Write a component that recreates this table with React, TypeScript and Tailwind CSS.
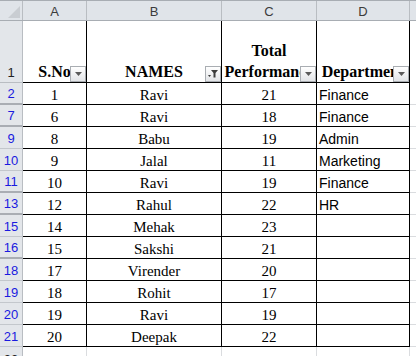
type Row = {
  num: number;
  sno: number;
  name: string;
  total: number;
  dept: string;
  gapAfter?: boolean;
};

const rows: Row[] = [
  { num: 2, sno: 1, name: "Ravi", total: 21, dept: "Finance", gapAfter: true },
  { num: 7, sno: 6, name: "Ravi", total: 18, dept: "Finance", gapAfter: true },
  { num: 9, sno: 8, name: "Babu", total: 19, dept: "Admin" },
  { num: 10, sno: 9, name: "Jalal", total: 11, dept: "Marketing" },
  { num: 11, sno: 10, name: "Ravi", total: 19, dept: "Finance", gapAfter: true },
  { num: 13, sno: 12, name: "Rahul", total: 22, dept: "HR", gapAfter: true },
  { num: 15, sno: 14, name: "Mehak", total: 23, dept: "" },
  { num: 16, sno: 15, name: "Sakshi", total: 21, dept: "", gapAfter: true },
  { num: 18, sno: 17, name: "Virender", total: 20, dept: "" },
  { num: 19, sno: 18, name: "Rohit", total: 17, dept: "" },
  { num: 20, sno: 19, name: "Ravi", total: 19, dept: "" },
  { num: 21, sno: 20, name: "Deepak", total: 22, dept: "" },
];

const sans = "font-['Liberation_Sans',Arial,sans-serif]";
const serif = "font-['Liberation_Serif','Times_New_Roman',serif]";

function FilterButton({ filtered }: { filtered?: boolean }) {
  return (
    <div className="absolute right-0 bottom-0 w-[16px] h-[16px] border border-[#a9adb2] bg-gradient-to-b from-white to-[#e2e4e7] flex items-center justify-center">
      {filtered ? (
        <svg width="12" height="10" viewBox="0 0 12 10">
          <polygon points="4,1 11,1 8.5,4 8.5,8.5 6.5,8.5 6.5,4" fill="#3c3c3c" />
          <polygon points="1,6 4,6 2.5,8" fill="#3c3c3c" />
        </svg>
      ) : (
        <svg width="7" height="4" viewBox="0 0 7 4">
          <polygon points="0,0 7,0 3.5,4" fill="#5a5a5a" />
        </svg>
      )}
    </div>
  );
}

export default function App() {
  return (
    <div className="w-[416px] h-[356px] overflow-hidden bg-white">
      {/* column letters */}
      <div className={`flex h-[21px] border-t border-b border-[#a8adb3] bg-[#e0e4e9] text-[13px] text-[#3b3b3b] ${sans}`}>
        <div className="w-[23px] shrink-0 border-r border-[#b9bdc2] relative">
          <svg className="absolute right-[2px] bottom-[2px]" width="12" height="12" viewBox="0 0 12 12">
            <polygon points="12,0 12,12 0,12" fill="#c9cdd2" />
          </svg>
        </div>
        <div className="w-[64px] shrink-0 border-r border-[#b9bdc2] flex items-end justify-center leading-[16px]">A</div>
        <div className="w-[135px] shrink-0 border-r border-[#b9bdc2] flex items-end justify-center leading-[16px]">B</div>
        <div className="w-[95px] shrink-0 border-r border-[#b9bdc2] flex items-end justify-center leading-[16px]">C</div>
        <div className="w-[93px] shrink-0 border-r border-[#b9bdc2] flex items-end justify-center leading-[16px]">D</div>
        <div className="flex-1" />
      </div>

      {/* row 1: table headers */}
      <div className="flex h-[62px]">
        <div className={`w-[23px] shrink-0 bg-[#e3e6ea] border-r border-b border-[#b9bdc2] flex items-end justify-center pb-[1px] leading-[16px] text-[13px] text-[#222] ${sans}`}>
          1
        </div>
        <div className={`relative w-[64px] shrink-0 border-r border-b border-black flex items-end justify-center overflow-hidden text-[16px] font-bold leading-[21px] text-black ${serif}`}>
          <span className="whitespace-nowrap">S.No</span>
          <FilterButton />
        </div>
        <div className={`relative w-[135px] shrink-0 border-r border-b border-black flex items-end justify-center overflow-hidden text-[16px] font-bold leading-[21px] text-black ${serif}`}>
          <span className="whitespace-nowrap">NAMES</span>
          <FilterButton filtered />
        </div>
        <div className={`relative w-[95px] shrink-0 border-r border-b border-black flex flex-col justify-end items-center overflow-hidden text-[16px] font-bold leading-[21px] text-black ${serif}`}>
          <span className="whitespace-nowrap">Total</span>
          <span className="whitespace-nowrap">Performance</span>
          <FilterButton />
        </div>
        <div className={`relative w-[93px] shrink-0 border-r border-b border-black flex items-end justify-center overflow-hidden text-[16px] font-bold leading-[21px] text-black ${serif}`}>
          <span className="whitespace-nowrap">Department</span>
          <FilterButton />
        </div>
        <div className="flex-1" />
      </div>

      {/* data rows */}
      {rows.map((r) => (
        <div key={r.num} className="flex h-[22px]">
          <div
            className={`w-[23px] shrink-0 bg-[#e3e6ea] border-r border-[#b9bdc2] flex items-end justify-center pb-[1px] leading-[16px] text-[13px] text-[#1a1adf] ${sans} ${
              r.gapAfter ? "border-b-2 border-b-[#a9adb3]" : "border-b border-b-[#c3c7cc]"
            }`}
          >
            {r.num}
          </div>
          <div className={`w-[64px] shrink-0 border-r border-b border-black flex items-end justify-center leading-[17px] text-[15px] text-black ${serif}`}>
            {r.sno}
          </div>
          <div className={`w-[135px] shrink-0 border-r border-b border-black flex items-end justify-center leading-[17px] text-[15px] text-black ${serif}`}>
            {r.name}
          </div>
          <div className={`w-[95px] shrink-0 border-r border-b border-black flex items-end justify-center leading-[17px] text-[15px] text-black ${serif}`}>
            {r.total}
          </div>
          <div className={`w-[93px] shrink-0 border-r border-b border-black flex items-end pl-[2px] leading-[17px] text-[14px] text-black ${sans}`}>
            {r.dept}
          </div>
          <div className="flex-1 border-b border-[#dadcdf]" />
        </div>
      ))}

      {/* row 22 */}
      <div className="flex h-[22px]">
        <div className={`w-[23px] shrink-0 bg-[#e3e6ea] border-r border-[#b9bdc2] flex items-end justify-center pb-[1px] leading-[16px] text-[13px] text-[#222] ${sans}`}>
          22
        </div>
        <div className="w-[64px] shrink-0 border-r border-[#dadcdf]" />
        <div className="w-[135px] shrink-0 border-r border-[#dadcdf]" />
        <div className="w-[95px] shrink-0 border-r border-[#dadcdf]" />
        <div className="w-[93px] shrink-0 border-r border-[#dadcdf]" />
        <div className="flex-1" />
      </div>
    </div>
  );
}
